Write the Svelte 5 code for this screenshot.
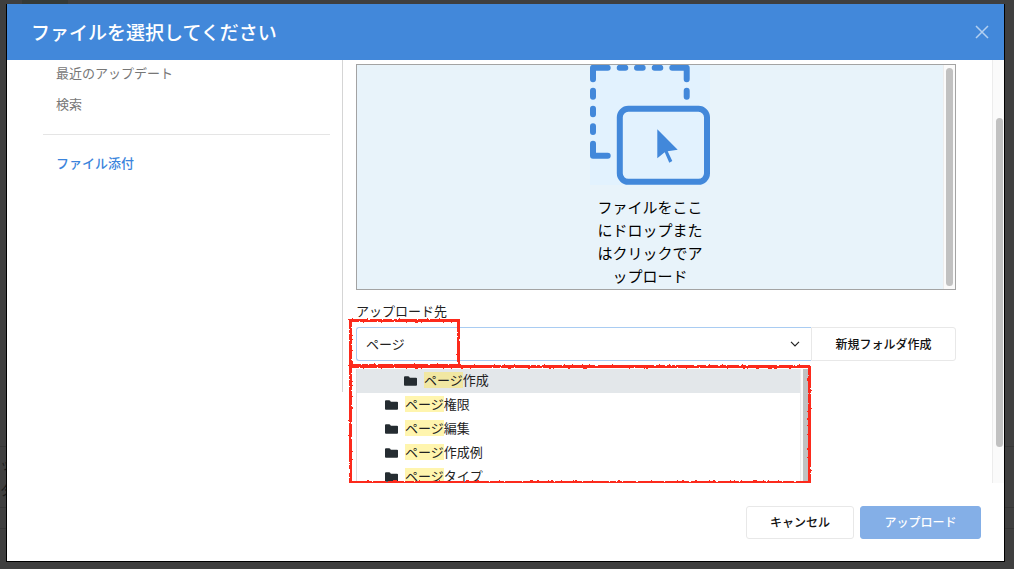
<script lang="ts">
  type Folder = { name: string; depth: number }

  const folders: Folder[] = [
    { name: 'ページ作成', depth: 2 },
    { name: 'ページ権限', depth: 1 },
    { name: 'ページ編集', depth: 1 },
    { name: 'ページ作成例', depth: 1 },
    { name: 'ページタイプ', depth: 1 },
  ]

  let query = $state('ページ')
  let selected = $state(0)

  function split(name: string): [string, string, string] {
    const at = query ? name.indexOf(query) : -1
    if (at < 0) return [name, '', '']
    return [name.slice(0, at), query, name.slice(at + query.length)]
  }
</script>

<div class="page">
  <div class="backdrop" aria-hidden="true">
    <div class="tab"></div>
    <div class="row texts"><span>ッ</span><span>タ</span></div>
    <div class="row"></div>
    <div class="row"></div>
  </div>

  <div class="modal" role="dialog" aria-labelledby="title">
    <header>
      <h1 id="title">ファイルを選択してください</h1>
      <button class="close" aria-label="閉じる">
        <svg viewBox="0 0 14 14" width="14" height="14">
          <path d="M1 1 13 13M13 1 1 13" fill="none" stroke="currentColor" stroke-width="1.5" />
        </svg>
      </button>
    </header>

    <div class="body">
      <nav>
        <a href="#recent">最近のアップデート</a>
        <a href="#search">検索</a>
        <hr />
        <a class="current" href="#attach">ファイル添付</a>
      </nav>

      <main>
        <div class="dropzone">
          <button class="drop">
            <svg class="drop-icon" viewBox="0 0 120 120" width="120" height="120">
              <rect width="120" height="120" fill="#e2f2fe" />
              <g fill="none" stroke="#4288da" stroke-width="6" stroke-linecap="round" stroke-linejoin="round">
                <path d="M17.7 2.8H3V14.3M82.3 2.8H96.7V14.3M3 78.7V90.7H17.7" />
                <path d="M29.7 2.8h5.6M47 2.8h5.7M64.7 2.8h5.6M96.7 25.7v6M3 25.7v6M3 43.7v5.6M3 61.3v5.7" />
                <rect x="29.8" y="43.8" width="87.2" height="73" rx="8.5" />
              </g>
              <path
                d="M67.3 64.3 87.7 84.7 77.7 86.2 82.3 96 79.3 97.7 74.7 87.3 67.3 93.3Z"
                fill="#4288da"
              />
            </svg>
            <span>ファイルをここにドロップまたはクリックでアップロード</span>
          </button>
          <div class="track"><div class="thumb"></div></div>
        </div>

        <label for="dest">アップロード先</label>
        <div class="destination">
          <div class="combo">
            <input id="dest" type="text" bind:value={query} autocomplete="off" />
            <svg viewBox="0 0 10 6" width="10" height="6">
              <path d="M1 .8 5 4.8 9 .8" fill="none" stroke="#222" stroke-width="1.2" />
            </svg>
          </div>
          <button class="new-folder">新規フォルダ作成</button>

          <div class="menu">
            <ul role="listbox" aria-label="アップロード先">
              {#each folders as folder, i}
                {@const [before, hit, after] = split(folder.name)}
                <li role="option" aria-selected={i === selected} class:nested={folder.depth > 1}>
                  <svg viewBox="0 0 13 10" width="13" height="10">
                    <path
                      d="M0 1.2Q0 .2 1 .2H4.2Q4.8.2 5.2.8L5.8 1.7H12Q13 1.7 13 2.6V9Q13 9.8 12 9.8H1Q0 9.8 0 9Z"
                      fill="#252c31"
                    />
                  </svg>
                  <span>{before}<mark>{hit}</mark>{after}</span>
                </li>
              {/each}
            </ul>
            <div class="menu-track"><div class="menu-thumb"></div></div>
          </div>

          <div class="note note-input"></div>
          <div class="note note-menu"></div>
        </div>
      </main>

      <div class="scrollbar"><div class="thumb"></div></div>
    </div>

    <footer>
      <button class="cancel">キャンセル</button>
      <button class="upload">アップロード</button>
    </footer>
  </div>
</div>

<!-- rough pen edge for the red notes -->
<svg class="defs" width="0" height="0" aria-hidden="true">
  <filter id="rough" x="-5%" y="-5%" width="110%" height="110%">
    <feTurbulence type="fractalNoise" baseFrequency="0.4" numOctaves="1" seed="4" />
    <feDisplacementMap in="SourceGraphic" scale="3" xChannelSelector="R" yChannelSelector="G" />
  </filter>
</svg>

<style>
  :global(body) {
    margin: 0;
    background: #3f3f3f;
  }

  .page {
    position: relative;
    box-sizing: border-box;
    height: 100vh;
    padding: 4px 9px 7px 6px;
    font-family: 'Noto Sans CJK JP', sans-serif;
    font-size: 13px;
    color: #222;
    overflow: hidden;
  }

  button, input {
    font: inherit;
    color: inherit;
    box-sizing: border-box;
  }
  button { cursor: pointer; }

  /* dimmed page behind the dialog */
  .backdrop {
    position: absolute;
    inset: 0;
    display: flex;
    flex-direction: column;
    justify-content: flex-end;
    padding-bottom: 20px;
    color: #1c1c1c;
  }
  .tab {
    width: 46px;
    height: 4px;
    margin: 0 0 auto 22px;
    background: #353a37;
  }
  .row {
    height: 20px;
    border-top: 1px solid #363636;
  }
  .texts {
    display: flex;
    flex-direction: column;
    justify-content: center;
    height: 60px;
    line-height: 26px;
  }

  .modal {
    position: relative;
    display: flex;
    flex-direction: column;
    box-sizing: border-box;
    height: 100%;
    background: #fff;
    border: 1px solid #000;
    border-top: 0;
  }

  header {
    flex: none;
    display: flex;
    align-items: center;
    justify-content: space-between;
    height: 56px;
    padding: 0 15px 0 24px;
    background: #4288da;
    color: #fff;
  }
  h1 {
    margin: 0;
    padding-bottom: 2px;
    font-size: 19px;
    font-weight: 500;
  }
  .close {
    display: flex;
    padding: 0;
    border: 0;
    background: none;
    color: #b3d0f1;
  }

  .body {
    flex: 1;
    min-height: 0;
    display: flex;
    align-items: flex-start;
    overflow: hidden;
  }

  nav {
    flex: none;
    box-sizing: border-box;
    width: 335px;
    padding: 0 12px 0 36px;
    line-height: 32px;
  }
  nav a {
    display: block;
    padding: 2px 0 0 13px;
    color: #777;
    text-decoration: none;
  }
  nav a:first-child {
    padding-top: 0;
    line-height: 26px;
  }
  nav .current {
    color: #3b84dc;
    font-weight: 500;
  }
  hr {
    margin: 14px 0 10px;
    border: 0;
    border-top: 1px solid #e5e5e5;
  }

  main {
    flex: 1;
    min-width: 0;
    padding: 4px 36px 31px 13px;
    border-left: 1px solid #d5d5d5;
  }

  .dropzone {
    display: flex;
    box-sizing: border-box;
    height: 226px;
    border: 1px solid #a3a3a3;
    background: #e8f3fa;
    overflow: hidden;
  }
  .drop {
    flex: 1;
    display: flex;
    flex-direction: column;
    align-items: center;
    gap: 10px;
    padding: 0;
    border: 0;
    background: none;
    color: #000;
    font-size: 15px;
    line-height: 23px;
  }
  .drop span {
    width: 107px;
    line-break: anywhere;
  }
  .drop-icon { flex: none; }
  .track {
    box-sizing: border-box;
    width: 12px;
    padding: 3px 2px;
    border-left: 1px solid #ececec;
    background: #fafafa;
  }
  .thumb {
    width: 7px;
    border-radius: 4px;
    background: #c1c1c1;
  }
  .track .thumb { height: 100%; }

  label {
    display: block;
    padding: 7px 0 2px;
    line-height: 28px;
  }

  .destination {
    position: relative;
    display: flex;
    height: 34px;
  }
  .combo {
    flex: 1;
    min-width: 0;
    display: flex;
    align-items: center;
    padding-right: 11px;
    border: 1px solid #a9ccf2;
    border-right: 0;
    border-radius: 3px 0 0 3px;
  }
  .combo input {
    flex: 1;
    min-width: 0;
    padding: 0 9px 2px;
    border: 0;
    outline: 0;
    background: none;
  }
  .new-folder {
    width: 145px;
    padding: 0 0 2px;
    border: 1px solid #e8e8e8;
    border-radius: 0 3px 3px 0;
    background: #fff;
    color: #111;
    font-size: 12px;
    font-weight: 500;
  }

  .menu {
    position: absolute;
    top: 42px;
    left: 0;
    right: 145px;
    display: flex;
    height: 130px;
    border-left: 1px solid #ddd;
    background: #fff;
  }
  .menu ul {
    flex: 1;
    margin: 0;
    padding: 0;
    list-style: none;
  }
  .menu li {
    display: flex;
    align-items: center;
    gap: 7px;
    height: 24px;
    padding-left: 28px;
  }
  .menu li.nested { padding-left: 47px; }
  .menu li[aria-selected='true'] { background: #e3e7ea; }
  .menu span {
    padding-bottom: 2px;
    line-height: 18px;
  }
  .menu mark {
    display: inline-block;
    height: 16px;
    line-height: 16px;
    background: #fff5ae;
    color: inherit;
  }
  .menu li[aria-selected='true'] mark { background: #f1e7a2; }
  .menu-track {
    box-sizing: border-box;
    width: 11px;
    padding-left: 2px;
    border-left: 1px solid #ececec;
    background: #fafafa;
  }
  .menu-thumb {
    width: 6px;
    height: 100%;
    background: #c1c1c1;
  }

  .note {
    position: absolute;
    box-sizing: border-box;
    border: 3px solid #fc2a1c;
    filter: url(#rough);
    pointer-events: none;
  }
  .note-input {
    top: -8px;
    left: -7px;
    width: 111px;
    height: 48px;
  }
  .note-menu {
    top: 38px;
    left: -7px;
    right: 145px;
    height: 119px;
  }

  .scrollbar {
    flex: none;
    align-self: stretch;
    box-sizing: border-box;
    width: 12px;
    display: grid;
    grid-template-rows: 58fr 328fr 36fr;
    padding-left: 3px;
    border-left: 1px solid #ececec;
    background: #fafafa;
  }
  .scrollbar .thumb { grid-row: 2; }

  footer {
    flex: none;
    display: flex;
    justify-content: flex-end;
    gap: 6px;
    padding: 23px 23px 22px;
  }
  footer button {
    height: 33px;
    padding: 0 0 2px;
    border: 1px solid #e8e8e8;
    border-radius: 3px;
    font-size: 12px;
    font-weight: 500;
  }
  .cancel {
    width: 108px;
    background: #fff;
    color: #111;
  }
  footer .upload {
    width: 121px;
    border-color: #84afe7;
    background: #84afe7;
    color: #fff;
  }

  .defs { position: absolute; }
</style>
